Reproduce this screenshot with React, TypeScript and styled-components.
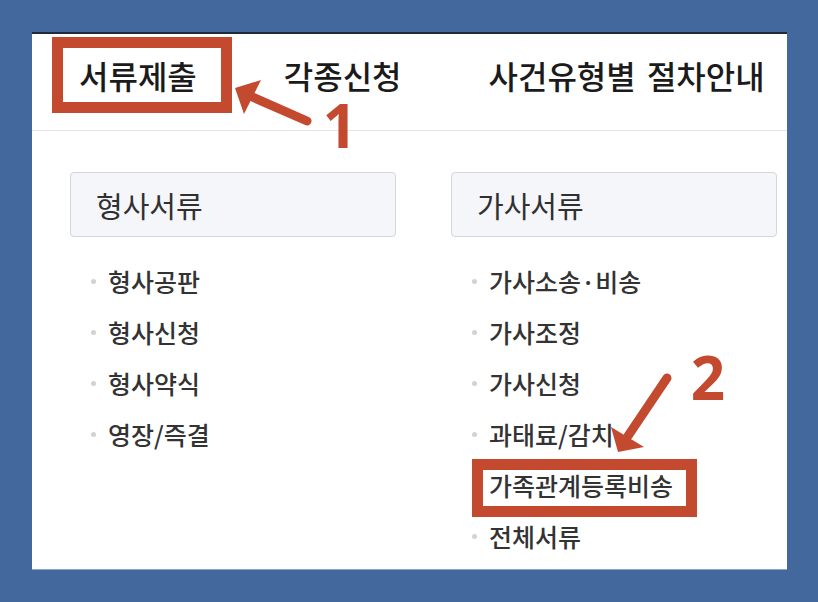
import React from "react";
import styled, { createGlobalStyle } from "styled-components";

const GlobalStyle = createGlobalStyle`
  html, body {
    margin: 0;
    padding: 0;
    background: #42689e;
  }
  body {
    font-family: "Noto Sans CJK KR", "Noto Sans", sans-serif;
    overflow: hidden;
  }
  * { box-sizing: border-box; }
`;

const Stage = styled.div`
  position: relative;
  width: 818px;
  height: 602px;
  padding: 32px 31px 32px 32px;
`;

const Panel = styled.div`
  width: 755px;
  height: 538px;
  background: #ffffff;
  border-top: 2px solid #1f2a3b;
  border-bottom: 1px solid #8fa6c6;
`;

const Header = styled.nav`
  height: 97px;
  border-bottom: 1px solid #e2e4ea;
  display: flex;
  align-items: flex-start;
  padding: 20px 0 0 47px;
  gap: 87px;
`;

const NavItem = styled.a`
  font-size: 32px;
  line-height: 42px;
  font-weight: 500;
  color: #1b1b1b;
  text-decoration: none;
  white-space: nowrap;
  word-spacing: 4px;
`;

const Body = styled.div`
  display: grid;
  grid-template-columns: 326px 326px;
  column-gap: 55px;
  padding: 41px 0 0 38px;
`;

const Column = styled.section`
  display: flex;
  flex-direction: column;
`;

const CategoryCard = styled.h2`
  margin: 0;
  height: 65px;
  display: flex;
  align-items: center;
  padding-left: 25px;
  background: #f5f6fa;
  border: 1px solid #d3d6dd;
  border-radius: 4px;
  font-size: 29px;
  font-weight: 400;
  color: #303030;
`;

const List = styled.ul`
  list-style: none;
  margin: 18px 0 0;
  padding: 0;
`;

const Item = styled.li`
  height: 51px;
  display: flex;
  align-items: center;
  font-size: 25px;
  font-weight: 500;
  color: #333333;
  white-space: nowrap;

  &::before {
    content: "";
    flex: none;
    width: 5px;
    height: 5px;
    border-radius: 50%;
    background: #d2d2d2;
    margin: 2px 12px 0 21px;
  }
`;

const Highlight = styled.div<{ $x: number; $y: number; $w: number; $h: number }>`
  position: absolute;
  left: ${(p) => p.$x}px;
  top: ${(p) => p.$y}px;
  width: ${(p) => p.$w}px;
  height: ${(p) => p.$h}px;
  border: 11px solid #c3492f;
  pointer-events: none;
`;

const Overlay = styled.svg`
  position: absolute;
  left: 0;
  top: 0;
  width: 818px;
  height: 602px;
  pointer-events: none;
`;

const StepNumber = styled.text`
  font-family: "Open Sans", "Liberation Sans", sans-serif;
  font-weight: 700;
  font-size: 60px;
  fill: #c3492f;
`;

const criminal = ["형사공판", "형사신청", "형사약식", "영장/즉결"];
const family = [
  "가사소송·비송",
  "가사조정",
  "가사신청",
  "과태료/감치",
  "가족관계등록비송",
  "전체서류",
];

export default function App() {
  return (
    <>
      <GlobalStyle />
      <Stage>
        <Panel>
          <Header>
            <NavItem>서류제출</NavItem>
            <NavItem>각종신청</NavItem>
            <NavItem>사건유형별 절차안내</NavItem>
          </Header>
          <Body>
            <Column>
              <CategoryCard>형사서류</CategoryCard>
              <List>
                {criminal.map((t) => (
                  <Item key={t}>{t}</Item>
                ))}
              </List>
            </Column>
            <Column>
              <CategoryCard>가사서류</CategoryCard>
              <List>
                {family.map((t) => (
                  <Item key={t}>{t}</Item>
                ))}
              </List>
            </Column>
          </Body>
        </Panel>

        <Highlight $x={52} $y={37} $w={180} $h={76} />
        <Highlight $x={472} $y={459} $w={225} $h={58} />

        <Overlay viewBox="0 0 818 602">
          <line x1={307} y1={121} x2={250} y2={96} stroke="#c3492f" strokeWidth={9} strokeLinecap="round" />
          <polygon points="235,88 261,80 244,114" fill="#c3492f" />
          <line x1={667} y1={378} x2={628} y2={436} stroke="#c3492f" strokeWidth={9} strokeLinecap="round" />
          <polygon points="618,452 611,427 644,447" fill="#c3492f" />
          <StepNumber x={340} y={148} textAnchor="middle">1</StepNumber>
          <StepNumber x={708} y={400} textAnchor="middle">2</StepNumber>
        </Overlay>
      </Stage>
    </>
  );
}
